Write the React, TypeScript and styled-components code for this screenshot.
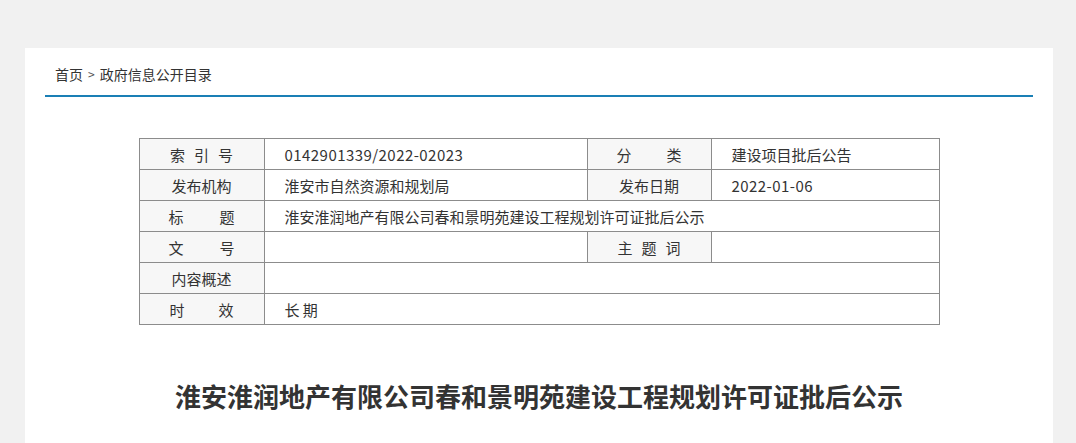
import styled, { createGlobalStyle } from "styled-components";

const GlobalStyle = createGlobalStyle`
  html, body {
    margin: 0;
    padding: 0;
    background: #f1f1f1;
  }
  body {
    font-family: "Noto Sans CJK SC", "Noto Sans", sans-serif;
    color: #333;
  }
`;

const Page = styled.div`
  padding: 48px 23px 0 25px;
  height: 443px;
  box-sizing: border-box;
  overflow: hidden;
`;

const Panel = styled.div`
  background: #fff;
  height: 100%;
  padding: 0 20px;
`;

const Crumbs = styled.div`
  display: flex;
  align-items: center;
  gap: 5px;
  height: 49px;
  box-sizing: border-box;
  padding: 4px 0 0 10px;
  border-bottom: 2px solid #1a7fb5;
  font-size: 14px;
  color: #333;
`;

const Sep = styled.span`
  font-size: 12px;
  color: #555;
`;

const InfoTable = styled.table`
  width: 800px;
  margin: 41px auto 0;
  border-collapse: collapse;
  table-layout: fixed;
  font-size: 15px;
  color: #333;
`;

const Label = styled.td`
  height: 30px;
  padding: 0;
  border: 1px solid #8c8c8c;
  background: #f7f7f7;
  text-align: center;
  vertical-align: middle;
`;

const Value = styled.td`
  height: 30px;
  padding: 0 0 0 20px;
  border: 1px solid #8c8c8c;
  background: #fff;
  vertical-align: middle;
  white-space: nowrap;
`;

const Num = styled.span`
  letter-spacing: 0.45px;
`;

const Spaced = styled.span<{ $gap: number }>`
  letter-spacing: ${(p) => p.$gap}px;
  margin-right: -${(p) => p.$gap}px;
`;

const Title = styled.h1`
  margin: 52px 0 0;
  text-align: center;
  font-size: 26px;
  font-weight: 700;
  color: #333;
`;

const L = ({ text, gap }: { text: string; gap: number }) => (
  <Label>
    <Spaced $gap={gap}>{text}</Spaced>
  </Label>
);

export default function App() {
  return (
    <>
      <GlobalStyle />
      <Page>
        <Panel>
          <Crumbs>
            <span>首页</span>
            <Sep>&gt;</Sep>
            <span>政府信息公开目录</span>
          </Crumbs>

          <InfoTable>
            <colgroup>
              <col style={{ width: 125 }} />
              <col style={{ width: 323 }} />
              <col style={{ width: 124 }} />
              <col style={{ width: 228 }} />
            </colgroup>
            <tbody>
              <tr>
                <L text="索引号" gap={9} />
                <Value><Num>0142901339/2022-02023</Num></Value>
                <L text="分类" gap={35} />
                <Value>建设项目批后公告</Value>
              </tr>
              <tr>
                <L text="发布机构" gap={0} />
                <Value>淮安市自然资源和规划局</Value>
                <L text="发布日期" gap={0} />
                <Value><Num>2022-01-06</Num></Value>
              </tr>
              <tr>
                <L text="标题" gap={36} />
                <Value colSpan={3}>淮安淮润地产有限公司春和景明苑建设工程规划许可证批后公示</Value>
              </tr>
              <tr>
                <L text="文号" gap={36} />
                <Value></Value>
                <L text="主题词" gap={9} />
                <Value></Value>
              </tr>
              <tr>
                <L text="内容概述" gap={0} />
                <Value colSpan={3}></Value>
              </tr>
              <tr>
                <L text="时效" gap={34} />
                <Value colSpan={3}>长 期</Value>
              </tr>
            </tbody>
          </InfoTable>

          <Title>淮安淮润地产有限公司春和景明苑建设工程规划许可证批后公示</Title>
        </Panel>
      </Page>
    </>
  );
}
